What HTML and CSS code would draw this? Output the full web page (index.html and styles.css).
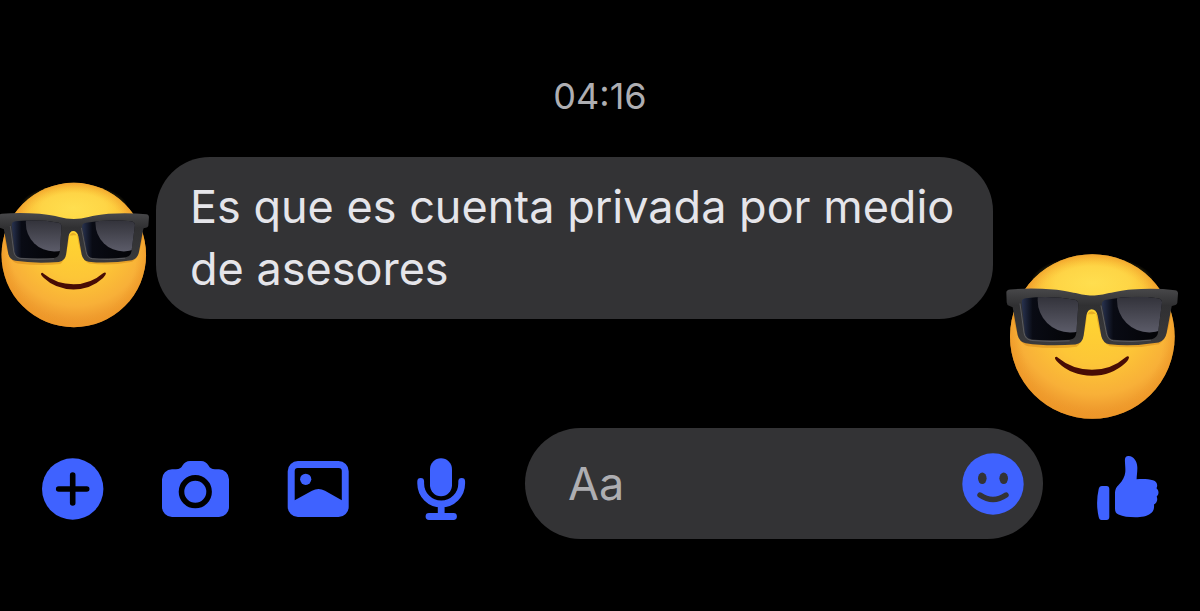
FILE: index.html
```html
<!DOCTYPE html>
<html lang="es">
<head>
    <meta charset="UTF-8">
    <meta name="viewport" content="width=device-width, initial-scale=1.0">
    <title>Chat</title>
    <link rel="stylesheet" href="styles.css">
</head>
<body>
    <!-- emoji compartido -->
    <svg class="defs" width="0" height="0" aria-hidden="true">
        <defs>
            <radialGradient id="face" gradientUnits="userSpaceOnUse" cx="300" cy="225" r="320">
                <stop offset="0" stop-color="#ffd531"/>
                <stop offset="0.45" stop-color="#fdc637"/>
                <stop offset="0.75" stop-color="#f8b038"/>
                <stop offset="1" stop-color="#e88b26"/>
            </radialGradient>
            <radialGradient id="rim" gradientUnits="userSpaceOnUse" cx="292" cy="291" r="247">
                <stop offset="0.86" stop-color="#f0a02c" stop-opacity="0"/>
                <stop offset="1" stop-color="#ef9a28" stop-opacity="0.7"/>
            </radialGradient>
            <radialGradient id="shine">
                <stop offset="0" stop-color="#ffe052" stop-opacity="0.9"/>
                <stop offset="0.6" stop-color="#ffdf50" stop-opacity="0.6"/>
                <stop offset="1" stop-color="#ffdb40" stop-opacity="0"/>
            </radialGradient>
            <linearGradient id="frame" x1="0" y1="0" x2="0" y2="1">
                <stop offset="0" stop-color="#48484a"/>
                <stop offset="0.3" stop-color="#303032"/>
                <stop offset="1" stop-color="#3a3a3c"/>
            </linearGradient>
            <linearGradient id="lens" x1="0" y1="0" x2="1" y2="0">
                <stop offset="0" stop-color="#2a3554"/>
                <stop offset="0.2" stop-color="#090b14"/>
                <stop offset="1" stop-color="#030305"/>
            </linearGradient>
            <linearGradient id="glare" gradientUnits="userSpaceOnUse" x1="0" y1="175" x2="0" y2="280">
                <stop offset="0" stop-color="#34343c"/>
                <stop offset="1" stop-color="#5c5c69"/>
            </linearGradient>
            <clipPath id="lensLeft">
                <path d="M92 176 Q170 167 240 181 Q251 184 250 197 L244 280 Q242 299 224 301 Q165 305 112 300 Q94 298 90 282 L80 190 Q79 178 92 176Z"/>
            </clipPath>
            <clipPath id="lensRight">
                <path d="M334 181 Q410 166 488 176 Q502 178 501 190 L489 280 Q487 295 470 299 Q410 306 356 301 Q340 299 337 282 L321 196 Q319 184 334 181Z"/>
            </clipPath>
            <symbol id="cool" viewBox="33 38 516 506">
                <circle cx="292" cy="291" r="247" fill="url(#face)"/>
                <circle cx="292" cy="291" r="247" fill="url(#rim)"/>
                <ellipse cx="292" cy="130" rx="185" ry="82" fill="url(#shine)"/>
                <path d="M54 225 Q66 315 100 320 Q180 330 245 322 Q268 308 276 225 Q290 205 304 225 Q316 312 345 320 Q420 329 492 314 Q520 295 528 222Z" fill="#c97912" opacity="0.4"/>
                <path d="M34 159 Q34 151 46 150 Q105 144 175 150 C235 155 255 168 292 168 C329 168 350 155 410 150 Q480 145 540 152 Q549 153 549 162 L547 190 Q546 197 533 199 L530 200 L515 280 Q511 303 491 309 Q410 322 343 314 Q324 311 319 290 L308 228 Q303 209 290 209 Q278 209 274 228 L266 288 Q263 312 241 315 Q155 321 92 311 Q73 307 68 287 L53 203 L42 199 Q36 197 35 188Z" fill="url(#frame)"/>
                <path d="M75 192 L87 280 Q90 300 110 303 Q170 308 224 304 M318 198 L334 280 Q338 302 356 304 Q410 309 468 302" fill="none" stroke="#6a6b70" stroke-width="3" opacity="0.7"/>
                <g clip-path="url(#lensLeft)">
                    <rect x="78" y="165" width="175" height="142" fill="url(#lens)"/>
                    <circle cx="225" cy="182" r="97" fill="url(#glare)"/>
                </g>
                <g clip-path="url(#lensRight)">
                    <rect x="318" y="165" width="185" height="142" fill="url(#lens)"/>
                    <circle cx="463" cy="182" r="97" fill="url(#glare)"/>
                </g>
                <path d="M180 354 Q184 349 189 355 Q233 391 291 391 Q350 390 392 353 Q400 348 402 353 Q402 359 392 370 Q350 409 291 409 Q229 408 190 370 Q178 358 180 354Z" fill="#480c05"/>
            </symbol>
        </defs>
    </svg>

    <main class="chat">
        <time class="time">04:16</time>

        <!-- mensaje -->
        <section class="message">
            <svg class="avatar" role="img" aria-label="Emoji con gafas de sol"><use href="#cool"/></svg>
            <p class="bubble">Es que es cuenta privada por medio de asesores</p>
            <svg class="reaction" role="img" aria-label="Emoji con gafas de sol"><use href="#cool"/></svg>
        </section>

        <!-- barra de escritura -->
        <form class="composer">
            <div class="actions">
                <button type="button" aria-label="Más">
                    <svg class="icon" viewBox="0 0 68 68">
                        <circle cx="34.7" cy="34" r="30.7" fill="currentColor"/>
                        <path d="M34.7 20v28M20.7 34h28" stroke="#000" stroke-width="5.6" stroke-linecap="round"/>
                    </svg>
                </button>
                <button type="button" aria-label="Cámara">
                    <svg class="icon" viewBox="0 0 68 68">
                        <path d="M11 14.3h4c3.5 0 5-1.3 6.5-3.8C23.5 7.5 25.5 6 29 6h11c3.5 0 5.5 1.5 7.5 4.5 1.5 2.5 3 3.8 6.5 3.8h4a10 10 0 0 1 10 10V52a10 10 0 0 1-10 10H11A10 10 0 0 1 1 52V24.3a10 10 0 0 1 10-10z" fill="currentColor"/>
                        <circle cx="34.3" cy="36.7" r="13.8" fill="none" stroke="#000" stroke-width="5.6"/>
                    </svg>
                </button>
                <button type="button" aria-label="Galería">
                    <svg class="icon" viewBox="0 0 68 68" fill="currentColor">
                        <path fill-rule="evenodd" d="M14 6h40.5a10.2 10.2 0 0 1 10.2 10.2v35.6A10.2 10.2 0 0 1 54.5 62H14A10.2 10.2 0 0 1 3.7 51.8V16.2A10.2 10.2 0 0 1 14 6zM13.7 13a3 3 0 0 0-3 3v29.3l17.3-9.5q6.5-3.5 13 0l16.8 9.5V16a3 3 0 0 0-3-3z"/>
                        <circle cx="21.7" cy="24.3" r="5.6"/>
                    </svg>
                </button>
                <button type="button" aria-label="Micrófono">
                    <svg class="icon" viewBox="0 0 68 68">
                        <rect x="23" y="3.3" width="22" height="38" rx="11" fill="currentColor"/>
                        <path d="M13.7 26.5v2a20.5 20.5 0 0 0 41 0v-2M34.2 49v10M22 61.5h24.5" fill="none" stroke="currentColor" stroke-width="6.8" stroke-linecap="round"/>
                    </svg>
                </button>
            </div>
            <div class="field">
                <input type="text" placeholder="Aa" aria-label="Mensaje">
                <button type="button" aria-label="Emojis">
                    <svg class="smile" viewBox="0 0 62 62">
                        <circle cx="31" cy="31" r="30.7" fill="currentColor"/>
                        <ellipse cx="20.3" cy="25.3" rx="4.3" ry="5.8" fill="#333335"/>
                        <ellipse cx="41.7" cy="25.3" rx="4.3" ry="5.8" fill="#333335"/>
                        <path d="M18 42q13 9 26 0" fill="none" stroke="#333335" stroke-width="5.4" stroke-linecap="round"/>
                    </svg>
                </button>
            </div>
            <button type="button" aria-label="Me gusta">
                <svg class="icon" viewBox="0 0 68 68" fill="currentColor">
                    <path d="M9 31h4.5q2.8 0 2.8 3v28q0 3-2.8 3H8.500q-2.200 0-2.800-3-3.200-14 0-28Q6.300 31 9 31z"/>
                    <path d="M22 39c0-5 1.500-7 4-9.500 3.500-3.500 6-8.500 6.300-12.500.3-4-.4-8.500-.4-12 0-3 1.500-4.200 3.800-4 5 .4 8.300 5 8.600 11 .2 4.500-.6 8.500-.7 12.300 6-.4 12-.3 16.400 1 3.700 1.200 5.200 4.700 3.500 8 2.600 2.200 2.700 6.200.2 8.200 1.300 3.300.2 6.500-2.700 8 .4 4-.6 7.300-3.500 9-3.500 2.900-9 3.700-15 3.700-7 0-12.500-.5-17-2.700-2.700-1.200-3.500-3-3.500-6z"/>
                </svg>
            </button>
        </form>
    </main>
</body>
</html>
```
FILE: styles.css
```css
* {
    box-sizing: border-box;
}

body {
    margin: 0;
    background: #000;
    color: #e5e5ea;
    font-family: Inter, "Liberation Sans", sans-serif;
    overflow-x: hidden;
}

.defs {
    position: absolute;
}

.chat {
    display: flex;
    flex-direction: column;
    padding: 76px 0 72px;
}

.time {
    margin-bottom: 41px;
    color: #aeaeb2;
    font-size: 36px;
    line-height: 40px;
    text-align: center;
}

.message {
    display: flex;
    align-items: flex-start;
    padding-right: 22px;
    margin-bottom: 7px;
}

.avatar {
    flex: none;
    width: 151px;
    height: 148px;
    margin: 24px 7px 0 -2px;
}

.bubble {
    flex: 1;
    margin: 0;
    padding: 19px 34px;
    background: #333335;
    border-radius: 54px;
    font-size: 45px;
    line-height: 62px;
}

.reaction {
    flex: none;
    width: 172px;
    height: 169px;
    margin: 95px 0 0 13px;
}

.composer {
    display: flex;
    align-items: flex-end;
    gap: 50px;
    padding: 0 39px 0 38px;
}

.actions {
    display: flex;
    gap: 55px;
}

button {
    flex: none;
    padding: 0;
    background: none;
    border: none;
    color: #3f62ff;
    cursor: pointer;
}

.icon {
    display: block;
    width: 68px;
    height: 68px;
    margin-bottom: 16px;
}

.field {
    display: flex;
    flex: 1;
    align-items: center;
    min-width: 0;
    height: 111px;
    padding: 0 19px 0 43px;
    background: #333335;
    border-radius: 56px;
}

.field input {
    flex: 1;
    min-width: 0;
    padding: 0;
    background: none;
    border: none;
    outline: none;
    color: #e5e5ea;
    font-family: inherit;
    font-size: 45px;
    line-height: 62px;
}

.field input::placeholder {
    color: #aeaeb2;
    opacity: 1;
}

.smile {
    display: block;
    width: 62px;
    height: 62px;
}
```
